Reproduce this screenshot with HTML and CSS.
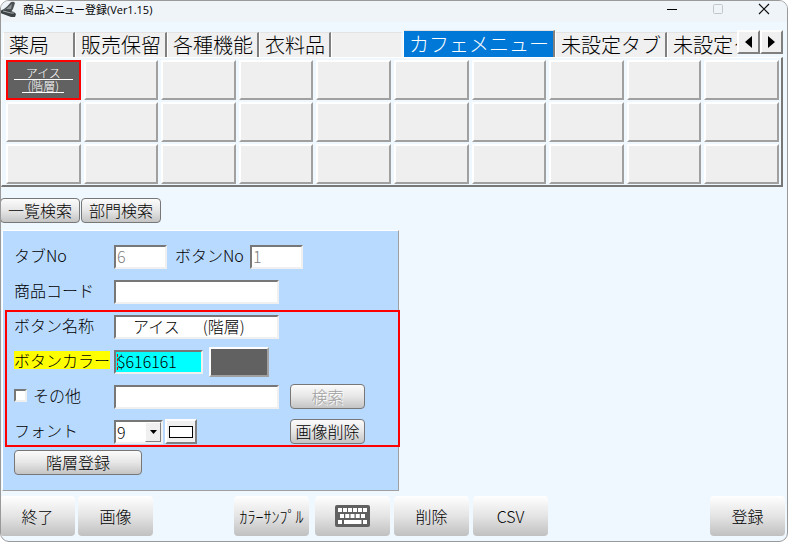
FILE: index.html
```html
<!DOCTYPE html>
<html lang="ja">
<head>
<meta charset="utf-8">
<title>商品メニュー登録</title>
<link rel="stylesheet" href="styles.css">
</head>
<body>
<div class="window">
  <header class="titlebar">
    <svg class="app-icon" width="18" height="18" viewBox="0 0 18 18" aria-hidden="true">
      <path d="M4 8 Q8 5 11 1 Q14 0 15 2 L13 8 L11 11 Z" fill="#4c5254"/>
      <path d="M6 8 L12 3 L11 8 Z" fill="#8a9294"/>
      <path d="M0 10 L4 8 L14 11 L16 13 L15 16 L11 16 L0 12 Z" fill="#3c4244"/>
      <path d="M3 10 L11 12 L14 12" fill="none" stroke="#a5adaf"/>
    </svg>
    <h1 class="title">商品メニュー登録(Ver1.15)</h1>
    <div class="controls">
      <button class="control" type="button" aria-label="最小化"><svg width="12" height="12" viewBox="0 0 12 12"><path d="M1 6.5H11" stroke="#000"/></svg></button>
      <button class="control" type="button" aria-label="最大化" disabled><svg width="12" height="12" viewBox="0 0 12 12"><rect x="1.500" y="1.500" width="9" height="9" rx="1" fill="none" stroke="#c3c7ca"/></svg></button>
      <button class="control" type="button" aria-label="閉じる"><svg width="12" height="12" viewBox="0 0 12 12"><path d="M1 1L11 11M11 1L1 11" stroke="#111" stroke-width="1.2"/></svg></button>
    </div>
  </header>

  <nav class="tabs">
    <div class="tab-strip">
      <button class="tab" type="button">薬局</button>
      <button class="tab" type="button">販売保留</button>
      <button class="tab" type="button">各種機能</button>
      <button class="tab" type="button">衣料品</button>
      <button class="tab" type="button" aria-label="空きタブ"></button>
      <button class="tab active" type="button">カフェメニュー</button>
      <button class="tab" type="button">未設定タブ</button>
      <button class="tab" type="button">未設定タブ</button>
    </div>
    <div class="scrollers">
      <button class="scroller" type="button" aria-label="前へ"><svg width="7" height="12" viewBox="0 0 7 12"><path d="M7 0V12L0 6Z"/></svg></button>
      <button class="scroller" type="button" aria-label="次へ"><svg width="7" height="12" viewBox="0 0 7 12"><path d="M0 0V12L7 6Z"/></svg></button>
    </div>
  </nav>

  <section class="keys">
    <button class="key selected" type="button"><span class="key-line">　アイス　</span><span class="key-line">&nbsp;&nbsp;(階層)&nbsp;&nbsp;</span></button>
    <button class="key" type="button"></button><button class="key" type="button"></button><button class="key" type="button"></button>
    <button class="key" type="button"></button><button class="key" type="button"></button><button class="key" type="button"></button>
    <button class="key" type="button"></button><button class="key" type="button"></button><button class="key" type="button"></button>
    <button class="key" type="button"></button><button class="key" type="button"></button><button class="key" type="button"></button>
    <button class="key" type="button"></button><button class="key" type="button"></button><button class="key" type="button"></button>
    <button class="key" type="button"></button><button class="key" type="button"></button><button class="key" type="button"></button>
    <button class="key" type="button"></button><button class="key" type="button"></button><button class="key" type="button"></button>
    <button class="key" type="button"></button><button class="key" type="button"></button><button class="key" type="button"></button>
    <button class="key" type="button"></button><button class="key" type="button"></button><button class="key" type="button"></button>
    <button class="key" type="button"></button><button class="key" type="button"></button>
  </section>

  <div class="searches">
    <button class="push wide" type="button">一覧検索</button>
    <button class="push wide" type="button">部門検索</button>
  </div>

  <form class="panel">
    <div class="row">
      <label class="label" for="tab-no">タブNo</label>
      <input class="field number" id="tab-no" value="6" disabled>
      <label class="inner-label" for="button-no">ボタンNo</label>
      <input class="field number" id="button-no" value="1" disabled>
    </div>
    <div class="row">
      <label class="label" for="code">商品コード</label>
      <input class="field long" id="code">
    </div>
    <div class="row">
      <label class="label" for="name">ボタン名称</label>
      <input class="field long" id="name" value="　アイス　  (階層)">
    </div>
    <div class="row">
      <label class="label" for="color"><span class="marked">ボタンカラー</span></label>
      <span class="color-box"><input class="field color" id="color" value="$616161"></span>
      <button class="swatch" type="button" aria-label="色を選択"></button>
    </div>
    <div class="row">
      <span class="label check"><input class="tick" type="checkbox" id="other"><label for="other">その他</label></span>
      <input class="field long" aria-label="その他の値">
      <button class="push trailing" type="button" disabled>検索</button>
    </div>
    <div class="row">
      <label class="label" for="font">フォント</label>
      <span class="select-box">
        <select class="field size" id="font"><option>9</option></select>
        <span class="drop"><svg width="7" height="4" viewBox="0 0 7 4"><path d="M0 0H7L3.5 4Z"/></svg></span>
      </span>
      <button class="font-color" type="button" aria-label="文字色"><span class="chip"></span></button>
      <button class="push trailing" type="button">画像削除</button>
    </div>
    <button class="push layer" type="button">階層登録</button>
    <div class="highlight"></div>
  </form>

  <footer class="actions">
    <button class="action" type="button">終了</button>
    <button class="action image" type="button">画像</button>
    <button class="action sample" type="button">ｶﾗｰｻﾝﾌﾟﾙ</button>
    <button class="action keyboard" type="button" aria-label="キーボード">
      <svg width="35" height="22" viewBox="0 0 35 22">
        <rect width="35" height="22" rx="2" fill="#606060"/>
        <path d="M3 5H32" stroke="#fff" stroke-width="4" stroke-dasharray="4 1"/>
        <path d="M5 11H30" stroke="#fff" stroke-width="4" stroke-dasharray="4 1.25"/>
        <path d="M3 17H7M9 17H26.500M28 17H32" stroke="#fff" stroke-width="4"/>
      </svg>
    </button>
    <button class="action" type="button">削除</button>
    <button class="action" type="button">CSV</button>
    <button class="action register" type="button">登録</button>
  </footer>
</div>
</body>
</html>
```

FILE: styles.css
```css
* {
  box-sizing: border-box;
}

body {
  margin: 0;
  background: #fff;
  color: #000;
  font: 300 16px/20px "Liberation Sans Narrow", "Noto Sans CJK JP", sans-serif;
}

button,
input,
select {
  margin: 0;
  padding: 0;
  color: inherit;
  font: inherit;
}

svg {
  display: block;
}

.window {
  display: flex;
  flex-direction: column;
  min-height: 100vh;
  overflow: hidden;
  border: 1px solid #999;
  border-radius: 9px;
  background: #f0f8ff;
}

.titlebar {
  display: flex;
  flex: none;
  height: 21px;
  background: #eff4f9;
}

.app-icon {
  flex: none;
  margin-left: -1px;
}

.title {
  flex: 1;
  margin: 0 0 0 5px;
  font: 400 11px/17px "Open Sans", "Noto Sans CJK JP", sans-serif;
  font-feature-settings: "palt";
}

.controls {
  display: flex;
}

.control {
  display: grid;
  place-items: center;
  width: 46px;
  height: 16px;
  border: 0;
  background: none;
}

.tabs {
  display: flex;
  align-items: flex-end;
  margin: 8px 4px 0 2px;
}

.tab-strip {
  display: flex;
  flex: 1;
  align-items: flex-end;
  min-width: 0;
  overflow: hidden;
}

.tab {
  flex: none;
  min-width: 72px;
  height: 25px;
  padding: 0 4px 0 5px;
  border: solid;
  border-width: 1px 2px 0 1px;
  border-color: #e3e3e3 #808080 #fff #fff;
  background: #f0f0f0;
  font-size: 20px;
  line-height: 24px;
  text-align: left;
  white-space: nowrap;
}

.tab:empty {
  border-right-color: #f0f8ff;
}

.tab.active {
  height: 27px;
  background: #0078d7;
  color: #fff;
}

.scrollers {
  display: flex;
  align-self: flex-start;
}

.scroller {
  display: grid;
  place-items: center;
  width: 23px;
  height: 24px;
  border: 2px solid;
  border-color: #fff #808080 #808080 #fff;
  background: #f0f0f0;
}

.keys {
  display: grid;
  grid-template-columns: repeat(10, minmax(0, 1fr));
  gap: 2px 3px;
  margin-right: 4px;
  padding: 2px 2px 1px 4px;
  border: solid;
  border-width: 1px 2px 2px 1px;
  border-color: #fff #777 #777 #fff;
}

.key {
  height: 40px;
  border: 2px solid;
  border-color: #fff #a0a0a0 #a0a0a0 #fff;
  background: #efefef;
}

.key.selected {
  display: flex;
  flex-direction: column;
  align-items: center;
  justify-content: center;
  border-color: #f00;
  background: #616161;
  color: #fff;
  font-size: 12px;
  line-height: 12px;
}

.key-line {
  border-bottom: 1px solid #fff;
  white-space: pre;
}

.searches {
  display: flex;
  gap: 1px;
  margin: 11px 0 0 -1px;
}

.push {
  height: 25px;
  padding-bottom: 2px;
  border: 1px solid #777;
  border-radius: 4px;
  background: linear-gradient(#fbfbfb, #e6e6e6 50%, #c4c4c4);
  line-height: 20px;
  white-space: nowrap;
}

.push:disabled {
  color: #a0a0a0;
  text-shadow: 1px 1px #fff;
}

.push.wide {
  width: 80px;
}

.panel {
  position: relative;
  align-self: flex-start;
  width: 397px;
  max-width: 100%;
  margin: 7px 0 0 1px;
  padding: 8px 10px 15px 11px;
  border: 1px solid;
  border-color: #fff #a0a0a0 #a0a0a0 #fff;
  background: #b9daff;
}

.row {
  display: flex;
  align-items: center;
  height: 35px;
}

.label {
  flex: none;
  width: 100px;
}

.label,
.inner-label {
  padding-bottom: 3px;
}

.inner-label {
  width: 75px;
  margin-left: 8px;
}

.marked {
  display: inline-block;
  background: #ff0;
  line-height: 18px;
}

.check {
  display: flex;
  align-items: center;
  gap: 6px;
}

.field {
  height: 24px;
  padding: 0 1px 2px;
  border: 2px solid;
  border-color: #777 #f0f0f0 #f0f0f0 #777;
  border-radius: 0;
  outline: 0;
  background: #fff;
}

.field:disabled {
  color: #808080;
}

.number {
  width: 53px;
}

.long {
  width: 165px;
}

.color-box {
  position: relative;
  display: flex;
}

.color-box::before {
  position: absolute;
  top: 4px;
  bottom: 4px;
  left: 3px;
  border-left: 1px dashed #f00;
  content: "";
}

.color {
  width: 89px;
  background: #0ff;
}

.swatch {
  width: 60px;
  height: 30px;
  margin-left: 6px;
  border: 2px solid;
  border-color: #fff #a0a0a0 #a0a0a0 #fff;
  background: #616161;
}

.tick {
  appearance: none;
  width: 13px;
  height: 13px;
  border: 2px solid;
  border-color: #777 #f0f0f0 #f0f0f0 #777;
  background: #fff;
}

.select-box {
  position: relative;
  display: flex;
}

.size {
  appearance: none;
  width: 49px;
}

.drop {
  position: absolute;
  top: 2px;
  right: 2px;
  bottom: 2px;
  display: grid;
  place-items: center;
  width: 16px;
  border: 1px solid;
  border-color: #fff #808080 #808080 #fff;
  background: #f0f0f0;
  pointer-events: none;
}

.font-color {
  display: grid;
  place-items: center;
  width: 32px;
  height: 25px;
  margin-left: 2px;
  border: 2px solid;
  border-color: #fff #808080 #808080 #fff;
  background: #f0f0f0;
}

.chip {
  width: 24px;
  height: 12px;
  border: 1px solid #000;
  background: #fff;
}

.trailing {
  width: 75px;
  margin-right: 23px;
  margin-left: auto;
}

.layer {
  display: block;
  width: 128px;
  margin-top: 1px;
}

.highlight {
  position: absolute;
  top: 79px;
  right: -2px;
  bottom: 43px;
  left: 2px;
  border: 2px solid #f00;
  pointer-events: none;
}

.actions {
  display: flex;
  gap: 4px;
  margin: auto 2px 5px -1px;
}

.action {
  display: grid;
  place-items: center;
  width: 75px;
  height: 40px;
  border: 0;
  border-radius: 4px;
  background: linear-gradient(#fff, #e4e4e4 50%, #c0c0c0);
  white-space: nowrap;
}

.image {
  margin-left: -1px;
}

.sample {
  margin-left: 77px;
}

.keyboard {
  margin-left: 2px;
}

.register {
  margin-left: auto;
}
```
